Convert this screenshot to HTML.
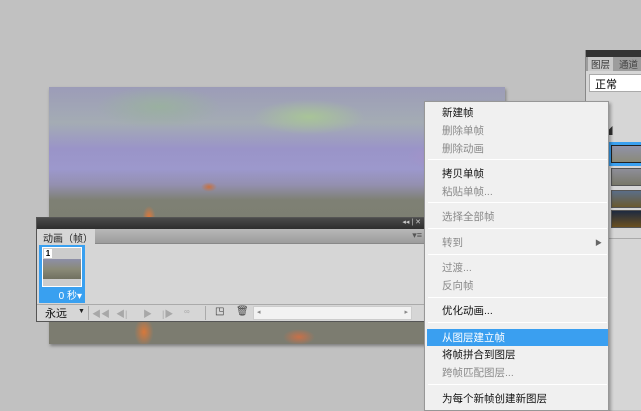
<!DOCTYPE html>
<html><head><meta charset="utf-8"><style>
*{margin:0;padding:0;box-sizing:border-box}
body{width:641px;height:408px;background:#c1c1c1;position:relative;overflow:hidden;font-family:"Liberation Sans","Noto Sans CJK SC",sans-serif;font-size:11px}
.abs{position:absolute}
#canvas{left:49px;top:87px;width:456px;height:257px;box-shadow:1px 2px 3px rgba(0,0,0,.35);
background:
radial-gradient(ellipse 12px 18px at 95px 245px,#d8783a 0%,transparent 80%),
radial-gradient(ellipse 20px 10px at 250px 250px,#c87048 0%,transparent 80%),
radial-gradient(ellipse 8px 14px at 100px 130px,#e07838 0%,transparent 80%),
radial-gradient(ellipse 10px 6px at 160px 100px,#c87040 0%,transparent 80%),
radial-gradient(ellipse 80px 25px at 260px 30px,#a8c498 0%,transparent 70%),
radial-gradient(ellipse 90px 30px at 110px 20px,#9ab0a0 0%,transparent 70%),
radial-gradient(ellipse 60px 20px at 400px 70px,#a890c8 0%,transparent 70%),
linear-gradient(180deg,#9c9cb8 0%,#a4acb4 14%,#9a94c8 24%,#9c98cc 32%,#9490b0 38%,#7e8074 44%,#7a7c6e 70%,#7c7c70 100%);}
#anim{left:36px;top:217px;width:390px;height:105px;background:#d6d6d6;border:1px solid #555}
#anim .hdr{height:11px;background:linear-gradient(#4a4a4a,#2e2e2e);position:relative}
#anim .tabs{height:15px;background:linear-gradient(#b8b8b8,#9c9c9c);border-bottom:1px solid #888;position:relative}
#anim .tab{position:absolute;left:0;top:0;height:16px;width:58px;background:#d6d6d6;color:#222;font-size:10px;padding:1px 0 0 6px}
.frame{left:2px;top:27px;width:46px;height:58px;background:#39a0f0}
.frame .th{position:absolute;left:3px;top:2px;width:40px;height:40px;background:#ccc;border:1px solid #fff}
.frame .th i{position:absolute;left:0;top:11px;width:38px;height:20px;background:linear-gradient(#8d8fa8,#8a8a78 50%,#707060)}
.frame .n{position:absolute;left:1px;top:1px;width:8px;height:9px;background:#fff;font-size:8px;font-weight:bold;line-height:9px;text-align:center;color:#000}
.frame .t{position:absolute;right:3px;bottom:1px;color:#fff;font-size:10px}
.ctrl{left:0;top:86px;width:388px;height:17px;background:#d6d6d6;border-top:1px solid #aaa;color:#a8a8a8;font-size:9px}
.ctrl span{position:absolute;top:2px}
.vs{position:absolute;top:1px;width:1px;height:14px;background:#aaa}
#menu{left:424px;top:101px;width:185px;height:310px;background:#f0f0f0;border:1px solid #979797;box-shadow:2px 2px 3px rgba(0,0,0,.3)}
.mi{position:absolute;left:17px;font-size:10.5px;color:#111;line-height:14px}
.mi.d{color:#8a8a8a}
.sep{position:absolute;left:3px;width:179px;height:1px;background:#c8c8c8;border-bottom:1px solid #fff}
#layers{left:585px;top:50px;width:60px;height:360px;background:#d6d6d6;border-left:1px solid #888}
</style></head><body>
<div id="canvas" class="abs"></div>

<div id="anim" class="abs">
 <div class="hdr"><span style="position:absolute;right:4px;top:0;color:#ccc;font-size:7px;line-height:10px">◂◂ | ✕</span></div>
 <div class="tabs"><div class="tab">动画（帧）</div><span style="position:absolute;right:3px;top:1px;font-size:9px;color:#555">▾≡</span></div>
 <div class="frame abs"><div class="th"><i></i><div class="n">1</div></div><div class="t">0 秒▾</div></div>
 <div class="ctrl abs">
  <span style="left:8px;top:0;color:#111;font-size:11px">永远</span>
  <span style="left:41px;top:3px;color:#222;font-size:7px">▼</span>
  <div class="vs" style="left:51px"></div>
  <span style="left:55px">◀◀</span>
  <span style="left:79px">◀|</span>
  <span style="left:106px">▶</span>
  <span style="left:125px">|▶</span>
  <span style="left:147px;font-size:8px">∞</span>
  <div class="vs" style="left:168px"></div>
  <span style="left:178px;color:#333;font-size:10px;top:1px">◳</span>
  <span style="left:199px;color:#444;font-size:10px;top:1px">🗑</span>
  <div style="position:absolute;left:216px;top:1px;width:159px;height:14px;background:#f2f2f2;border:1px solid #ccc;font-size:7px;color:#888;padding-left:3px;line-height:12px">◂<span style="position:static;float:right;margin-right:3px">▸</span></div>
 </div>
</div>

<div id="layers" class="abs">
 <div style="height:7px;background:#333"></div>
 <div style="height:14px;background:#9c9c9c;position:relative">
  <span style="position:absolute;left:2px;top:0;background:#c8c8c8;padding:0 3px;font-size:9.5px;color:#333">图层</span>
  <span style="position:absolute;left:33px;top:0;font-size:9.5px;color:#444">通道</span></div>
 <div style="position:absolute;left:3px;top:24px;width:60px;height:18px;background:#fff;border:1px solid #aaa;font-size:11px;padding:1px 5px">正常</div>
 <div style="position:absolute;left:1px;top:51px;font-size:9px;color:#333">: ⁸ ⅋</div>
 <div style="position:absolute;left:1px;top:74px;font-size:9px;color:#333">: ▣ ◢</div>
 <div style="position:absolute;left:22px;top:92px;width:38px;height:24px;background:#3aa0f0;padding:3px"><div style="width:32px;height:18px;background:linear-gradient(#9092a8,#8a8a78);border:1px solid #222"></div></div>
 <div style="position:absolute;left:25px;top:118px;width:32px;height:18px;background:linear-gradient(#8e8e98,#787868);border:1px solid #555"></div>
 <div style="position:absolute;left:25px;top:140px;width:32px;height:18px;background:linear-gradient(#5a6e88,#6a5a30);border:1px solid #555"></div>
 <div style="position:absolute;left:25px;top:160px;width:32px;height:18px;background:linear-gradient(#1e2a40,#6a5020);border:1px solid #555"></div>
 <div style="position:absolute;left:0;top:188px;width:60px;height:1px;background:#aaa"></div>
</div>

<div id="menu" class="abs">
 <div class="mi" style="top:4px">新建帧</div>
 <div class="mi d" style="top:22px">删除单帧</div>
 <div class="mi d" style="top:40px">删除动画</div>
 <div class="sep" style="top:57px"></div>
 <div class="mi" style="top:65px">拷贝单帧</div>
 <div class="mi d" style="top:83px">粘贴单帧...</div>
 <div class="sep" style="top:100px"></div>
 <div class="mi d" style="top:108px">选择全部帧</div>
 <div class="sep" style="top:126px"></div>
 <div class="mi d" style="top:134px">转到</div>
 <span style="position:absolute;left:170px;top:136px;font-size:7px;color:#666">▶</span>
 <div class="sep" style="top:152px"></div>
 <div class="mi d" style="top:159px">过渡...</div>
 <div class="mi d" style="top:177px">反向帧</div>
 <div class="sep" style="top:195px"></div>
 <div class="mi" style="top:202px">优化动画...</div>
 <div class="sep" style="top:220px"></div>
 <div style="position:absolute;left:2px;top:227px;width:181px;height:17px;background:#3a9ff0"></div>
 <div class="mi" style="top:229px;color:#fff">从图层建立帧</div>
 <div class="mi" style="top:246px">将帧拼合到图层</div>
 <div class="mi d" style="top:264px">跨帧匹配图层...</div>
 <div class="sep" style="top:282px"></div>
 <div class="mi" style="top:290px">为每个新帧创建新图层</div>
</div>
</body></html>
